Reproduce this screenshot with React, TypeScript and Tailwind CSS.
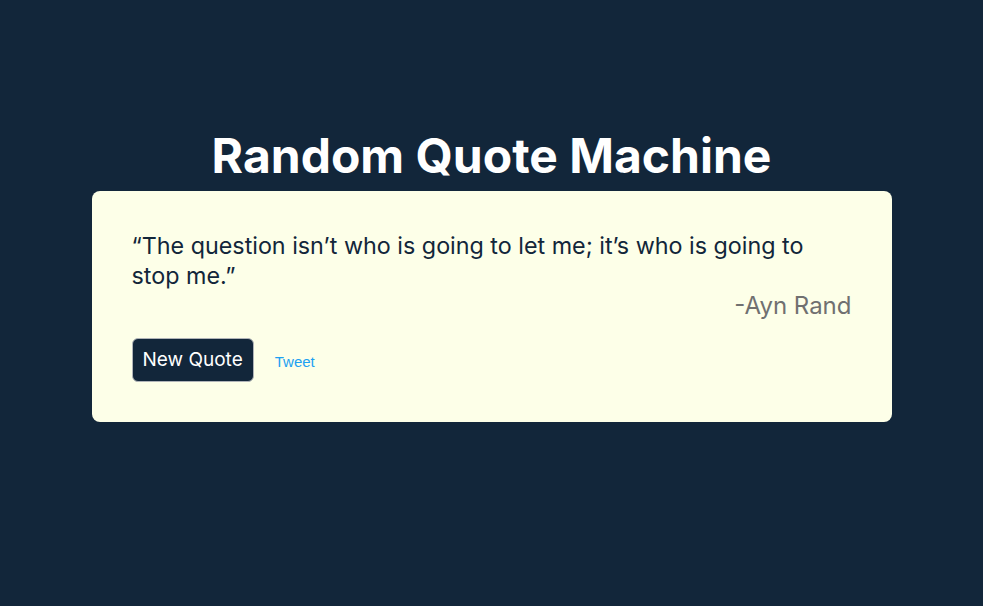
export default function App() {
  return (
    <div className="min-h-screen w-full bg-[#12263a] font-['Inter',sans-serif] pt-[126px]">
      <h1 className="text-center text-[48px] font-bold leading-[60px] text-white">
        Random Quote Machine
      </h1>
      <div className="mx-auto mt-[5px] w-[800px] rounded-lg bg-[#fdffe8] px-10 pt-10 pb-[40px]">
        <p className="text-[23.3px] leading-[30px] text-[#12263a]">
          “The question isn’t who is going to let me; it’s who is going to stop me.”
        </p>
        <p className="text-right text-[24px] leading-[30px] text-[#707070]">-Ayn Rand</p>
        <div className="mt-[17px] flex items-center gap-[21px]">
          <button className="h-11 rounded-md border border-[#b0b4b8] bg-[#12263a] px-[10px] text-[19px] text-white">
            New Quote
          </button>
          <a href="#" className="mt-1 font-['Liberation_Sans',sans-serif] text-[15px] text-[#1da1f2]">
            Tweet
          </a>
        </div>
      </div>
    </div>
  );
}
